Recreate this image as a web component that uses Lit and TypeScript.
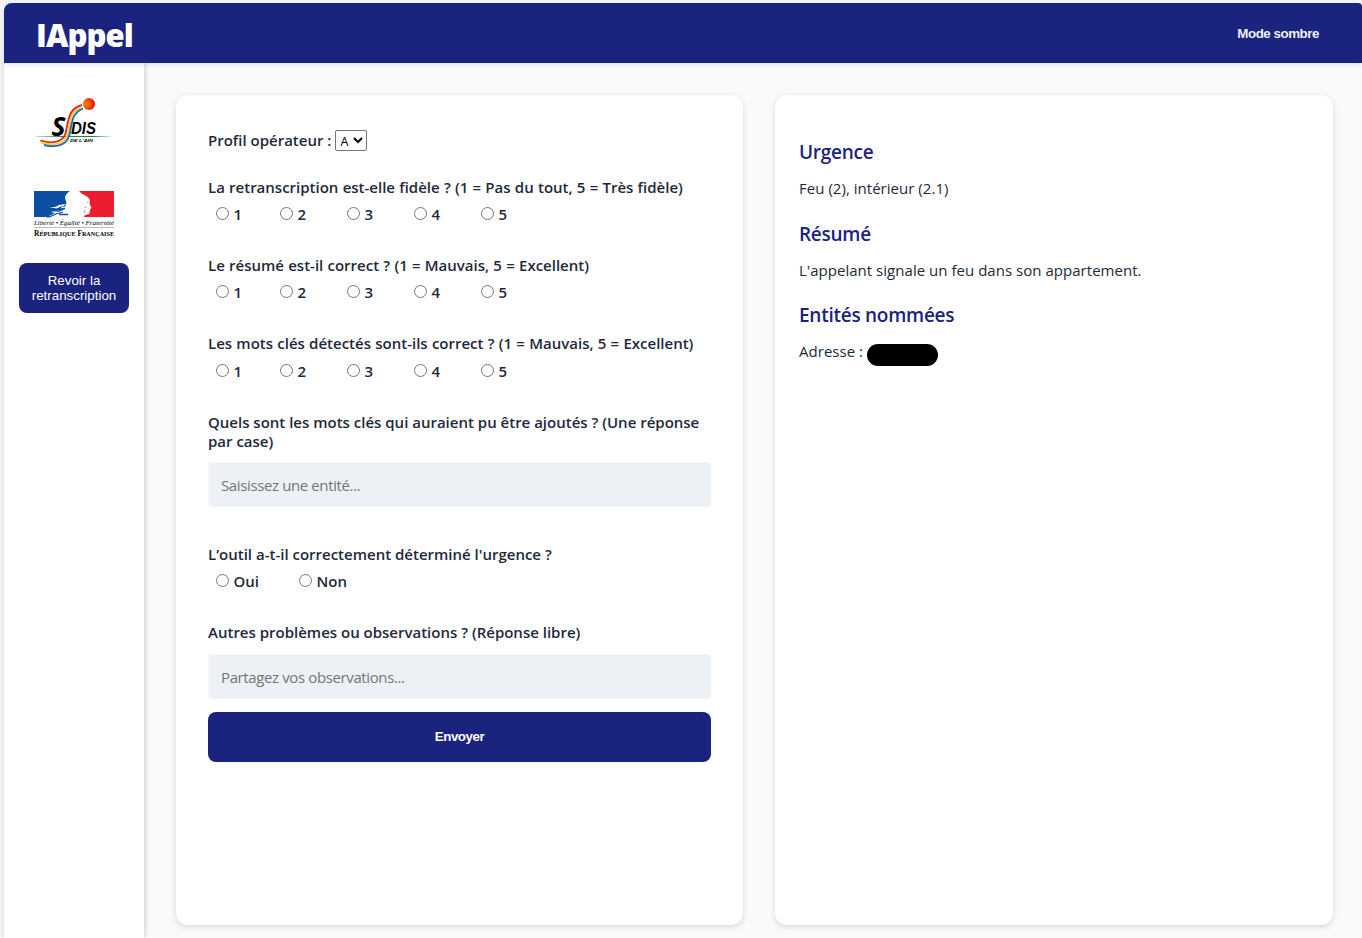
import { LitElement, html, css } from "lit";
import { customElement } from "lit/decorators.js";

interface Question {
  id: string;
  title: string;
}

const RATINGS: Question[] = [
  { id: "fidele", title: "La retranscription est-elle fidèle ? (1 = Pas du tout, 5 = Très fidèle)" },
  { id: "resume", title: "Le résumé est-il correct ? (1 = Mauvais, 5 = Excellent)" },
  { id: "mots", title: "Les mots clés détectés sont-ils correct ? (1 = Mauvais, 5 = Excellent)" },
];

@customElement("sdis-logo")
export class SdisLogo extends LitElement {
  static styles = css`
    :host { display: block; width: 80px; height: 56px; }
    svg { display: block; }
    .big { font: italic 700 26px "Open Sans", sans-serif; }
    .mid { font: italic 700 16px "Liberation Sans", sans-serif; }
    .tiny { font: italic 700 4px "Liberation Sans", sans-serif; }
  `;
  render() {
    return html`<svg width="80" height="56" viewBox="0 0 80 56">
      <defs>
        <radialGradient id="sun" cx=".25" cy=".5" r=".75">
          <stop offset="0" stop-color="#ff8a00" /><stop offset="1" stop-color="#e80c0c" />
        </radialGradient>
        <linearGradient id="line">
          <stop offset="0" stop-color="#2f9a48" stop-opacity=".3" /><stop offset=".35" stop-color="#1d8a38" />
          <stop offset=".75" stop-color="#1d8a38" /><stop offset="1" stop-color="#2f9a48" stop-opacity=".1" />
        </linearGradient>
      </defs>
      <circle cx="55" cy="9" r="6" fill="url(#sun)" />
      <path d="M2 41h76v1.100H2z" fill="url(#line)" />
      <g fill="none" stroke-width="1.900">
        <path d="M6.500 45.500C18 49.500 29 47 31.500 38.500C34.500 28 33 14 48 10" stroke="#e3262e" />
        <path d="M7.500 47.500C20 51.500 31 49 33.500 39.500C36.500 29 35 16 48.500 11.800" stroke="#ffd21c" />
        <path d="M10 50C22 53 32.500 50.500 35.200 40.500C38 30 37 18 49 13.600" stroke="#1c6fd0" />
      </g>
      <text class="big" x="17.500" y="40.500" textLength="14" lengthAdjust="spacingAndGlyphs">S</text>
      <text class="mid" x="37" y="39" textLength="25" lengthAdjust="spacingAndGlyphs">DIS</text>
      <text class="tiny" x="36" y="46.500" textLength="23" lengthAdjust="spacingAndGlyphs">DE L'AIN</text>
    </svg>`;
  }
}

@customElement("rf-logo")
export class RfLogo extends LitElement {
  static styles = css`
    :host { display: block; width: 82px; height: 48px; }
    svg { display: block; }
    .motto { font: italic 6.8px "Liberation Serif", serif; }
    .caps { font: 700 8px "Liberation Serif", serif; }
    .small { font-size: 6.6px; }
  `;
  render() {
    return html`<svg width="82" height="48" viewBox="0 0 82 48">
      <path d="M1 1h36c-3 2-5 4-5 7l1.500 5-1.500 4 2 3-3 3v4H1z" fill="#0b4ea2" />
      <path d="M46 1h35v26H51c0-2 2-2.500 5-3 1-1 .5-2 .8-3 .6-.5.2-1 .3-1.800l1.400-1.500-2-4c0-1.500 1-2.500 0-4.500C54 5 49 5 46 1z" fill="#ed1c2e" />
      <path d="M16 18c4-1 7-1 10-3l7-1-4 3 6-1 1 11H14l8-4-4-1 7-2-3-2z" fill="#fff" />
      <path d="M20 20.500l6 .5 6-2.500M14 27c4 0 6-2 9-3l7-2M26 24.500h9M29 16.500l-6 3 9-1" fill="none" stroke="#0b4ea2" stroke-width="1.300" />
      <path d="M51.500 17.500l2-.5M52 20l-1 3M55 12l-1 1" stroke="#888c9c" stroke-width=".8" />
      <text class="motto" x="1" y="35" textLength="80" lengthAdjust="spacingAndGlyphs">Liberté • Égalité • Fraternité</text>
      <path d="M1 37.500h80" stroke="#777" stroke-width=".5" />
      <text class="caps" x="1" y="45.700" textLength="80" lengthAdjust="spacingAndGlyphs">R<tspan class="small">ÉPUBLIQUE</tspan> F<tspan class="small">RANÇAISE</tspan></text>
    </svg>`;
  }
}

@customElement("app-root")
export class AppRoot extends LitElement {
  static styles = css`
    * { box-sizing: border-box; }
    :host {
      display: block;
      height: 938px;
      padding: 3px 0 0 4px;
      background: #f3f4f6;
      overflow: hidden;
      font-family: "Open Sans", sans-serif;
      color: #1e293b;
    }
    .header {
      position: relative;
      z-index: 2;
      display: flex;
      align-items: center;
      justify-content: space-between;
      height: 60px;
      padding: 0 43px 0 32px;
      border-radius: 8px 4px 0 0;
      background: #1a237e;
      color: #fff;
      box-shadow: 0 2px 5px rgba(0, 0, 0, 0.1);
    }
    .brand { margin: 0; padding-top: 4px; font: 800 31px/44px "Open Sans", sans-serif; letter-spacing: -0.9px; }
    .mode, .review, .send {
      border: 0;
      background: #1a237e;
      color: #fff;
      font: 700 13.333px/15px "Liberation Sans", sans-serif;
      letter-spacing: -0.45px;
    }
    .mode { padding: 0; color: #f0f1f7; }
    .body { display: flex; height: 875px; background: #f9fafc; }
    .side {
      flex: none;
      display: flex;
      flex-direction: column;
      align-items: center;
      width: 140px;
      padding-top: 32px;
      background: #fff;
      box-shadow: 1px 0 5px rgba(0, 0, 0, 0.18);
    }
    .rf { margin: 39px 0 25px; }
    .review { width: 110px; height: 50px; padding: 0; border-radius: 8px; font-weight: 400; letter-spacing: 0; }
    .main {
      flex: 1;
      display: grid;
      grid-template-columns: 567px 558px;
      gap: 32px;
      padding: 32px 0 0 32px;
    }
    .card {
      height: 830px;
      border-radius: 12px;
      background: #fff;
      box-shadow: 0 2px 6px rgba(0, 0, 0, 0.14);
    }
    .form { padding: 35px 32px 0; font-size: 15px; line-height: 19px; font-weight: 600; }
    .profile { display: flex; align-items: center; height: 21px; gap: 4px; margin-bottom: 27px; }
    select {
      width: 32px;
      height: 21px;
      padding: 1px 0 0;
      border: 1px solid #767676;
      border-radius: 2px;
      background: #fff;
      color: #000;
      font: 12.500px "Open Sans", sans-serif;
    }
    .question { height: 78.200px; white-space: nowrap; }
    .rating { word-spacing: 0.350px; }
    .options { display: flex; height: 19px; margin-top: 8.200px; padding-left: 8px; }
    .option { display: flex; align-items: center; gap: 4.500px; width: 67px; }
    .option:first-child { width: 64px; }
    .option.wide { width: 83px; }
    input[type="radio"] { width: 13px; height: 13px; margin: 0 0 2px; }
    .words { height: 49.400px; }
    .field {
      display: block;
      width: 503px;
      height: 45px;
      padding: 1px 12px 0;
      border: 1px solid #f1f5f9;
      border-radius: 4px;
      background: #ecf1f6;
      font: 15px "Open Sans", sans-serif;
      letter-spacing: -0.380px;
    }
    .field::placeholder { color: #757575; }
    .first { margin-bottom: 38px; }
    .free { height: 31px; }
    .send { display: block; width: 503px; height: 50px; margin-top: 12.500px; border-radius: 8px; }
    .info { padding: 44px 24px 0; }
    h2 { margin: 0; height: 26px; font-size: 19px; line-height: 26px; font-weight: 600; letter-spacing: -0.260px; color: #1a237e; }
    p { margin: 12px 0 20px; height: 23.700px; line-height: 22px; font-size: 15px; letter-spacing: 0.030px; }
    .address { display: flex; margin-top: 12px; }
    .mask { width: 71px; height: 22px; margin: 3.400px 0 0 4px; border-radius: 11px; background: #000; }
  `;

  private option(group: string, label: string, wide = false) {
    return html`<label class="option ${wide ? "wide" : ""}"><input type="radio" name=${group} />${label}</label>`;
  }

  render() {
    return html`
      <header class="header">
        <h1 class="brand">IAppel</h1>
        <button class="mode">Mode sombre</button>
      </header>
      <div class="body">
        <aside class="side">
          <sdis-logo></sdis-logo>
          <rf-logo class="rf"></rf-logo>
          <button class="review">Revoir la<br />retranscription</button>
        </aside>
        <main class="main">
          <section class="card form">
            <div class="profile">
              <span>Profil opérateur :</span>
              <select><option>A</option><option>B</option></select>
            </div>
            ${RATINGS.map(
              (q) => html`<div class="question">
                <div class="rating">${q.title}</div>
                <div class="options">${["1", "2", "3", "4", "5"].map((n) => this.option(q.id, n))}</div>
              </div>`
            )}
            <div class="words">Quels sont les mots clés qui auraient pu être ajoutés ? (Une réponse<br />par case)</div>
            <input class="field first" placeholder="Saisissez une entité..." />
            <div class="question">
              <div>L’outil a-t-il correctement déterminé l'urgence ?</div>
              <div class="options">${this.option("urgence", "Oui", true)}${this.option("urgence", "Non", true)}</div>
            </div>
            <div class="free">Autres problèmes ou observations ? (Réponse libre)</div>
            <input class="field" placeholder="Partagez vos observations..." />
            <button class="send">Envoyer</button>
          </section>
          <section class="card info">
            <h2>Urgence</h2>
            <p>Feu (2), intérieur (2.1)</p>
            <h2>Résumé</h2>
            <p>L'appelant signale un feu dans son appartement.</p>
            <h2>Entités nommées</h2>
            <p class="address"><span>Adresse :</span><span class="mask"></span></p>
          </section>
        </main>
      </div>
    `;
  }
}
